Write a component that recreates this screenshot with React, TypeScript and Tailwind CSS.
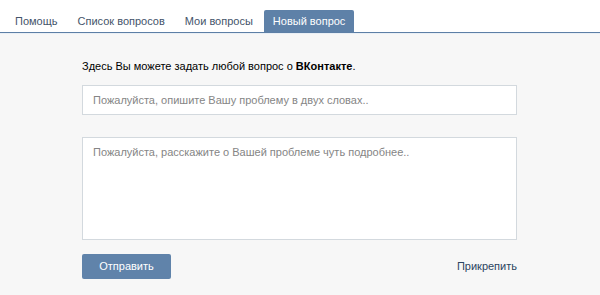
import { useState } from "react"

const tabs = ["Помощь", "Список вопросов", "Мои вопросы", "Новый вопрос"]

function App() {
    const [active, setActive] = useState(3)

    return (
        <div className="w-[600px] h-[295px] bg-[#f7f7f7] text-[11px] text-black" style={{ fontFamily: '"Liberation Sans", Arial, sans-serif' }}>
            <div className="bg-white h-[33px] flex items-end pl-[6px] gap-[2px] border-b border-[#5d7fa6]">
                {tabs.map((tab, index) => (
                    <button
                        key={index}
                        onClick={() => setActive(index)}
                        className={
                            index === active
                                ? "h-[22px] px-[9px] rounded-t-[2px] bg-[#5e81a8] text-white"
                                : "h-[22px] px-[9px] text-[#44546a]"
                        }
                    >
                        {tab}
                    </button>
                ))}
            </div>
            <div className="h-px bg-[#e9eff5]" />
            <div className="pl-[82px] pr-[83px] pt-[25px]">
                <p className="leading-[14px]">
                    Здесь Вы можете задать любой вопрос о <b>ВКонтакте</b>.
                </p>
                <input
                    className="mt-[12px] w-full h-[30px] px-[10px] bg-white border border-[#d3d9de] outline-none placeholder:text-[#858585]"
                    placeholder="Пожалуйста, опишите Вашу проблему в двух словах.."
                />
                <textarea
                    className="mt-[22px] block w-full h-[103px] px-[10px] py-[6px] bg-white border border-[#d3d9de] outline-none resize-none placeholder:text-[#858585]"
                    placeholder="Пожалуйста, расскажите о Вашей проблеме чуть подробнее.."
                />
                <div className="mt-[14px] flex items-center justify-between">
                    <button className="w-[89px] h-[25px] rounded-[2px] bg-[#6083aa] text-white">Отправить</button>
                    <span className="text-[#2b4561] cursor-pointer">Прикрепить</span>
                </div>
            </div>
        </div>
    )
}

export default App
